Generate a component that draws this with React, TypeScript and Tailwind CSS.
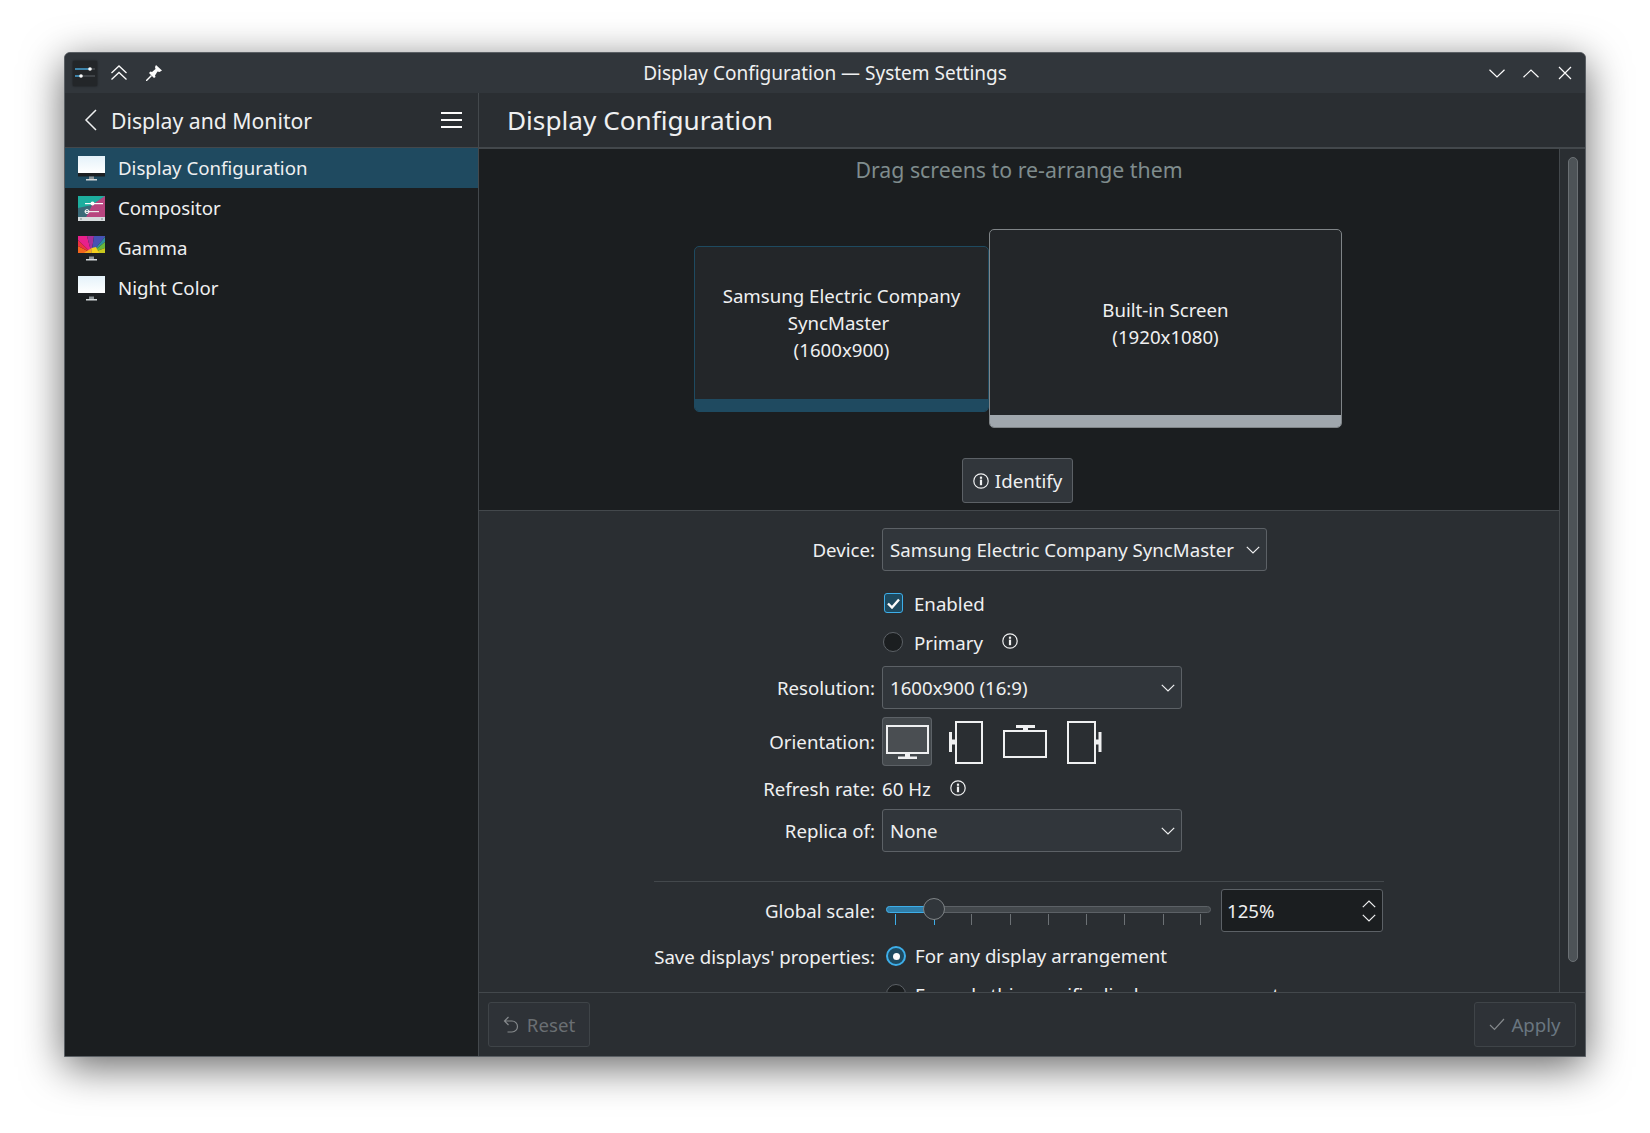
import type { ReactNode } from "react";

function MonitorIcon() {
  return (
    <svg width="27" height="25" viewBox="0 0 27 25">
      <defs>
        <linearGradient id="mon" x1="0" y1="0" x2="0" y2="1">
          <stop offset="0" stopColor="#e4f2fa" />
          <stop offset="1" stopColor="#ffffff" />
        </linearGradient>
      </defs>
      <rect x="0" y="0" width="27" height="17" fill="url(#mon)" />
      <rect x="0" y="17" width="27" height="3.5" fill="#1d2023" />
      <rect x="11" y="20.5" width="5" height="2.5" fill="#8d9498" />
      <rect x="8" y="23" width="11" height="1.5" fill="#d4d8da" />
    </svg>
  );
}

function CompositorIcon() {
  return (
    <svg width="27" height="25" viewBox="0 0 27 25">
      <rect width="27" height="25" fill="#3a7f8d" />
      <polygon points="0,0 27,0 0,18" fill="#1dae9e" />
      <polygon points="27,0 27,21 8,21 14,9" fill="#b8457f" />
      <polygon points="0,12 14,9 8,21 0,21" fill="#3b6a78" />
      <rect x="7" y="7" width="18" height="1.2" fill="#fcfcfc" />
      <circle cx="14.5" cy="7.6" r="2" fill="#fcfcfc" />
      <rect x="7" y="15" width="14" height="1.2" fill="#e8e8e8" />
      <circle cx="9" cy="15.6" r="2" fill="none" stroke="#fcfcfc" strokeWidth="1" />
      <rect x="0" y="21" width="27" height="4" fill="#d7dcde" />
      <rect x="2" y="22.5" width="2" height="1" fill="#7f8c8d" />
      <rect x="23" y="22.5" width="2" height="1" fill="#7f8c8d" />
    </svg>
  );
}

function GammaIcon() {
  return (
    <svg width="27" height="25" viewBox="0 0 27 25">
      <polygon points="13.5,17 0,17 0,10" fill="#f2661e" />
      <polygon points="13.5,17 0,10 0,4" fill="#ee3040" />
      <polygon points="13.5,17 0,4 0,0 9,0" fill="#e8208a" />
      <polygon points="13.5,17 9,0 16,0" fill="#a5309a" />
      <polygon points="13.5,17 16,0 27,0 27,1" fill="#4652b4" />
      <polygon points="13.5,17 27,1 27,6" fill="#2f8f9f" />
      <polygon points="13.5,17 27,6 27,12" fill="#68b83c" />
      <polygon points="13.5,17 27,12 27,17" fill="#c8c81e" />
      <polygon points="6,17 13.5,17 13.5,12" fill="#f4a81e" />
      <polygon points="13.5,17 21,17 18,11 13.5,12" fill="#f4d01e" />
      <rect x="0" y="17" width="27" height="3.5" fill="#1d2023" />
      <rect x="11" y="20.5" width="5" height="2.5" fill="#8d9498" />
      <rect x="8" y="23" width="11" height="1.5" fill="#d4d8da" />
    </svg>
  );
}

function InfoIcon() {
  return (
    <svg width="16" height="16" viewBox="0 0 16 16" fill="none" className="text-[#eff0f1]">
      <circle cx="8" cy="8" r="7.2" stroke="currentColor" strokeWidth="1.2" />
      <rect x="6.9" y="6.6" width="2.2" height="5.6" fill="currentColor" />
      <rect x="6.9" y="3.6" width="2.2" height="2.2" fill="currentColor" />
    </svg>
  );
}

function Chevron({ dir = "down" }: { dir?: "down" | "up" }) {
  return (
    <svg width="14" height="8" viewBox="0 0 14 8" fill="none" stroke="#eff0f1" strokeWidth="1.2">
      <path d={dir === "down" ? "M0.8 0.8 7 7 13.2 0.8" : "M0.8 7.2 7 1 13.2 7.2"} />
    </svg>
  );
}

function Combo({ text, width }: { text: string; width: string }) {
  return (
    <div
      className={`${width} h-[43px] flex items-center justify-between pl-[7px] pr-[6px] bg-[#31363b] border border-[#5c6166] rounded-[3px] whitespace-nowrap`}
    >
      <span>{text}</span>
      <Chevron />
    </div>
  );
}

function Row({ label, className, children }: { label?: string; className: string; children: ReactNode }) {
  return (
    <div className={`flex items-center ${className}`}>
      <div className="w-[221px] shrink-0 text-right whitespace-nowrap">{label}</div>
      <div className="ml-[7px] flex items-center">{children}</div>
    </div>
  );
}

function Radio({ checked }: { checked?: boolean }) {
  if (checked) {
    return (
      <div className="w-[20px] h-[20px] rounded-full bg-[#1e4a60] border-2 border-[#3daee9] flex items-center justify-center">
        <div className="w-[7px] h-[7px] rounded-full bg-[#fcfcfc]" />
      </div>
    );
  }
  return <div className="w-[20px] h-[20px] rounded-full bg-[#1b1e20] border border-[#5c6166]" />;
}

function OrientationIcon({ children }: { children: ReactNode }) {
  return (
    <svg width="50" height="49" viewBox="0 0 50 49" fill="#eff0f1">
      {children}
    </svg>
  );
}

const sideItems = [
  { name: "Display Configuration", icon: <MonitorIcon />, active: true },
  { name: "Compositor", icon: <CompositorIcon /> },
  { name: "Gamma", icon: <GammaIcon /> },
  { name: "Night Color", icon: <MonitorIcon /> },
];

const ticks = [9, 48, 85, 124, 162, 200, 238, 277, 314];

export default function App() {
  return (
    <div className="h-[1133px] bg-white pt-[52px] pl-[64px] overflow-hidden font-['Noto_Sans',sans-serif] text-[18.67px] leading-[27px] text-[#eff0f1]">
      <div className="w-[1522px] h-[1005px] flex flex-col border border-[#5a5f64] rounded-t-[6px] bg-[#2a2e32] shadow-[0_10px_42px_rgba(0,0,0,0.6)]">
        {/* Title bar */}
        <div className="h-[40px] shrink-0 flex items-center bg-[#31363b] rounded-t-[5px] relative">
          <div className="ml-[8px] w-[24px] h-[25px] bg-[#232629] flex items-center justify-center shadow-[0_0_2px_rgba(0,0,0,0.6)]">
            <svg width="20" height="14" viewBox="0 0 20 14">
              <rect x="0" y="2.5" width="20" height="1" fill="#5c6166" />
              <rect x="0" y="2.4" width="15" height="1.2" fill="#3daee9" />
              <circle cx="15" cy="3" r="1.8" fill="#fcfcfc" />
              <rect x="0" y="9.5" width="20" height="1" fill="#5c6166" />
              <rect x="0" y="9.4" width="6" height="1.2" fill="#3daee9" />
              <circle cx="6" cy="10" r="1.8" fill="#fcfcfc" />
            </svg>
          </div>
          <svg width="16" height="16" viewBox="0 0 16 16" fill="none" stroke="#fcfcfc" strokeWidth="1.3" className="ml-[14px]">
            <path d="M0.5 8 8 1 15.5 8M0.5 14.5 8 7.5 15.5 14.5" />
          </svg>
          <svg width="16" height="16" viewBox="0 0 16 16" fill="#fcfcfc" className="ml-[19px]">
            <path d="M10 0 16 5.5 13.5 7 11.5 6.5 9 10.5 9.5 12 8 13 3 8 4.5 6.5 6 7 9.5 4 9 2Z" />
            <path d="M5 10 6 11 1 16 0 16 0 15Z" />
          </svg>
          <div className="absolute inset-x-0 text-center text-[19px]">Display Configuration — System Settings</div>
          <div className="ml-auto mr-[13px] flex items-center">
            <svg width="16" height="9" viewBox="0 0 16 9" fill="none" stroke="#fcfcfc" strokeWidth="1.2">
              <path d="M0.5 0.8 8 8 15.5 0.8" />
            </svg>
            <svg width="16" height="9" viewBox="0 0 16 9" fill="none" stroke="#fcfcfc" strokeWidth="1.2" className="ml-[18px]">
              <path d="M0.5 8.2 8 1 15.5 8.2" />
            </svg>
            <svg width="14" height="14" viewBox="0 0 14 14" fill="none" stroke="#fcfcfc" strokeWidth="1.2" className="ml-[19px]">
              <path d="M1 1 13 13M13 1 1 13" />
            </svg>
          </div>
        </div>

        <div className="flex-1 flex min-h-0">
          {/* Sidebar */}
          <div className="w-[414px] shrink-0 flex flex-col border-r border-[#43484c] bg-[#1b1e20]">
            <div className="h-[55px] shrink-0 flex items-center bg-[#2a2e32] border-b border-[#43484c] text-[21.2px]">
              <svg width="13" height="22" viewBox="0 0 13 22" fill="none" stroke="#eff0f1" strokeWidth="1.5" className="ml-[19px]">
                <path d="M12 1 2 11 12 21" />
              </svg>
              <span className="ml-[14px]">Display and Monitor</span>
              <div className="ml-auto mr-[16px] w-[21px] flex flex-col gap-[4.5px]">
                <div className="h-[2.5px] bg-[#fcfcfc]" />
                <div className="h-[2.5px] bg-[#fcfcfc]" />
                <div className="h-[2.5px] bg-[#fcfcfc]" />
              </div>
            </div>
            {sideItems.map((item) => (
              <div
                key={item.name}
                className={`h-[40px] flex items-center pl-[13px] gap-[13px] ${item.active ? "bg-[#1f4a60]" : ""}`}
              >
                {item.icon}
                <span className="pb-[1px]">{item.name}</span>
              </div>
            ))}
          </div>

          {/* Main */}
          <div className="flex-1 flex flex-col min-w-0">
            <div className="h-[56px] shrink-0 flex items-center pl-[28px] border-b-2 border-[#43484c] text-[26.2px]">
              Display Configuration
            </div>
            <div className="flex-1 flex min-h-0">
              <div className="flex-1 flex flex-col min-w-0 overflow-hidden border-r border-[#43484c]">
                {/* Screen arrangement */}
                <div className="h-[362px] shrink-0 bg-[#1b1e20] border-b border-[#43484c] relative">
                  <div className="pt-[7px] text-center text-[#7f8c8d] text-[21.3px]">Drag screens to re-arrange them</div>
                  <div className="absolute left-[215px] top-[97px] w-[295px] h-[166px] flex flex-col bg-[#232629] border border-[#1e4a60] rounded-[5px] overflow-hidden">
                    <div className="flex-1 flex flex-col items-center justify-center text-center pb-[1px]">
                      <div>Samsung Electric Company</div>
                      <div className="pr-[6px]">SyncMaster</div>
                      <div>(1600x900)</div>
                    </div>
                    <div className="h-[12px] bg-[#1f4a60]" />
                  </div>
                  <div className="absolute left-[510px] top-[80px] w-[353px] h-[199px] flex flex-col bg-[#232629] border border-[#7f8487] rounded-[5px] overflow-hidden">
                    <div className="flex-1 flex flex-col items-center justify-center text-center">
                      <div>Built-in Screen</div>
                      <div>(1920x1080)</div>
                    </div>
                    <div className="h-[12px] bg-[#a0a7ad]" />
                  </div>
                  <div className="absolute left-[483px] top-[309px] w-[111px] h-[45px] flex items-center justify-center gap-[6px] bg-[#31363b] border border-[#5c6166] rounded-[3px]">
                    <InfoIcon />
                    <span>Identify</span>
                  </div>
                </div>

                {/* Form */}
                <div className="flex-1 min-h-0 overflow-hidden pl-[175px]">
                  <Row label="Device:" className="mt-[17px] h-[43px]">
                    <Combo text="Samsung Electric Company SyncMaster" width="w-[385px]" />
                  </Row>
                  <Row className="mt-[13px] h-[38px]">
                    <div className="ml-[2px] w-[19px] h-[20px] rounded-[3px] bg-[#1e4a60] border border-[#3daee9] flex items-center justify-center">
                      <svg width="13" height="11" viewBox="0 0 13 11" fill="none" stroke="#fcfcfc" strokeWidth="2.4">
                        <path d="M1 5.5 5 9.5 12 1.5" />
                      </svg>
                    </div>
                    <span className="ml-[11px]">Enabled</span>
                  </Row>
                  <Row className="mt-[1px] h-[38px]">
                    <div className="ml-[1px]">
                      <Radio />
                    </div>
                    <span className="ml-[11px]">Primary</span>
                    <span className="ml-[19px] mb-[2px]">
                      <InfoIcon />
                    </span>
                  </Row>
                  <Row label="Resolution:" className="mt-[5px] h-[43px]">
                    <Combo text="1600x900 (16:9)" width="w-[300px]" />
                  </Row>
                  <Row label="Orientation:" className="mt-[8px] h-[49px]">
                    <div className="flex gap-[9px]">
                      <div className="w-[50px] h-[49px] bg-[#43484c] rounded-[4px] shadow-[inset_0_0_0_1px_#5c6166]">
                        <OrientationIcon>
                          <rect x="5" y="9" width="41" height="27" fill="#4a4e52" stroke="#eff0f1" strokeWidth="2" />
                          <rect x="23" y="37" width="5" height="3" />
                          <rect x="16" y="39.5" width="19" height="2.5" />
                        </OrientationIcon>
                      </div>
                      <div className="w-[50px] h-[49px]">
                        <OrientationIcon>
                          <rect x="15" y="5" width="26" height="41" fill="none" stroke="#eff0f1" strokeWidth="2" />
                          <rect x="8" y="15" width="3" height="20" />
                          <rect x="11" y="22.5" width="3" height="5" />
                        </OrientationIcon>
                      </div>
                      <div className="w-[50px] h-[49px]">
                        <OrientationIcon>
                          <rect x="4" y="14" width="42" height="26" fill="none" stroke="#eff0f1" strokeWidth="2" />
                          <rect x="16" y="8" width="19" height="3" />
                          <rect x="23" y="11" width="5" height="2" />
                        </OrientationIcon>
                      </div>
                      <div className="w-[50px] h-[49px]">
                        <OrientationIcon>
                          <rect x="9" y="5" width="27" height="41" fill="none" stroke="#eff0f1" strokeWidth="2" />
                          <rect x="39.5" y="15" width="3" height="20" />
                          <rect x="37" y="22.5" width="3" height="5" />
                        </OrientationIcon>
                      </div>
                    </div>
                  </Row>
                  <Row label="Refresh rate:" className="mt-[7px] h-[30px]">
                    <span>60 Hz</span>
                    <span className="ml-[19px]">
                      <InfoIcon />
                    </span>
                  </Row>
                  <Row label="Replica of:" className="mt-[6px] h-[43px]">
                    <Combo text="None" width="w-[300px]" />
                  </Row>
                  <div className="mt-[29px] w-[730px] h-px bg-[#43484c]" />
                  <Row label="Global scale:" className="mt-[7px] h-[43px]">
                    <div className="relative w-[325px] h-[43px] ml-[4px]">
                      <div className="absolute left-0 right-0 top-[17px] h-[7px] rounded-full bg-[#43484c] border border-[#5c6166]" />
                      <div className="absolute left-0 top-[17px] w-[48px] h-[7px] rounded-l-full bg-[#2f7da8] border border-[#3daee9]" />
                      {ticks.map((t, i) => (
                        <div
                          key={t}
                          className={`absolute top-[25px] w-px h-[11px] ${i < 2 ? "bg-[#3daee9]" : "bg-[#6c7175]"}`}
                          style={{ left: t }}
                        />
                      ))}
                      <div className="absolute left-[37px] top-[9px] w-[22px] h-[22px] rounded-full bg-[#31363b] border border-[#7f8487]" />
                    </div>
                    <div className="ml-[10px] w-[162px] h-[43px] flex items-center justify-between pl-[5px] pr-[6px] bg-[#1b1e20] border border-[#5c6166] rounded-[3px]">
                      <span>125%</span>
                      <div className="flex flex-col gap-[6px]">
                        <Chevron dir="up" />
                        <Chevron />
                      </div>
                    </div>
                  </Row>
                  <Row label="Save displays' properties:" className="mt-[9px] h-[30px]">
                    <div className="ml-[4px]">
                      <Radio checked />
                    </div>
                    <span className="ml-[9px] pb-[2px] whitespace-nowrap">For any display arrangement</span>
                  </Row>
                  <Row className="mt-[8px] h-[30px]">
                    <div className="ml-[4px]">
                      <Radio />
                    </div>
                    <span className="ml-[9px] whitespace-nowrap">For only this specific display arrangement</span>
                  </Row>
                </div>
              </div>
              {/* Scrollbar */}
              <div className="w-[25px] shrink-0 flex justify-center pt-[8px]">
                <div className="w-[10px] h-[805px] rounded-full bg-[#4d5357] border border-[#6b7074]" />
              </div>
            </div>

            {/* Footer */}
            <div className="h-[64px] shrink-0 flex items-center justify-between pl-[9px] pr-[9px] border-t border-[#43484c]">
              <div className="w-[102px] h-[45px] flex items-center justify-center gap-[8px] bg-[#2e3237] border border-[#3f4448] rounded-[3px] text-[#6a6f73]">
                <svg width="16" height="18" viewBox="0 0 16 18" fill="none" stroke="#85898c" strokeWidth="1.2">
                  <path d="M5.5 1 1.5 5 5.5 9M1.5 5H9a5.5 5.5 0 0 1 0 11H4.5" />
                </svg>
                <span>Reset</span>
              </div>
              <div className="w-[102px] h-[45px] flex items-center justify-center gap-[6px] bg-[#2e3237] border border-[#3f4448] rounded-[3px] text-[#6a7680]">
                <svg width="16" height="13" viewBox="0 0 16 13" fill="none" stroke="#85898c" strokeWidth="1.2">
                  <path d="M1 7 5.5 11.5 15 1" />
                </svg>
                <span>Apply</span>
              </div>
            </div>
          </div>
        </div>
      </div>
    </div>
  );
}
